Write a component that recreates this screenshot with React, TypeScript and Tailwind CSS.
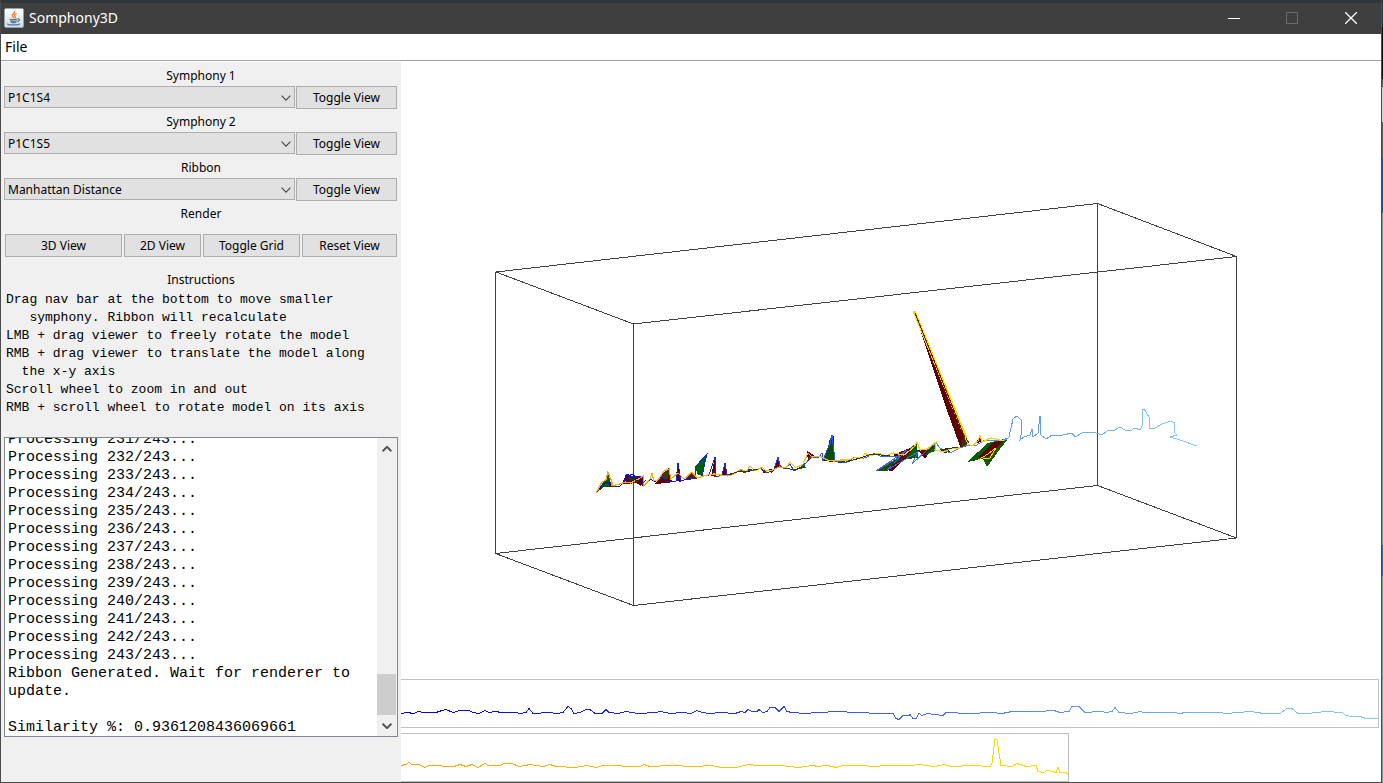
import type { ReactNode } from "react";

const UI = "font-['Noto_Sans','Open_Sans',sans-serif]";

const symphonies = ["P1C1S4", "P1C1S5"];
const metrics = ["Manhattan Distance", "Euclidean Distance"];

const logLines = [
  ...Array.from({ length: 13 }, (_, i) => `Processing ${231 + i}/243...`),
  "Ribbon Generated. Wait for renderer to",
  "update.",
  "",
  "Similarity %: 0.9361208436069661",
];

const instructions = [
  "Drag nav bar at the bottom to move smaller",
  "   symphony. Ribbon will recalculate",
  "LMB + drag viewer to freely rotate the model",
  "RMB + drag viewer to translate the model along",
  "  the x-y axis",
  "Scroll wheel to zoom in and out",
  "RMB + scroll wheel to rotate model on its axis",
].join("\n");

function JavaIcon() {
  return (
    <svg width="20" height="20" viewBox="0 0 20 20" aria-hidden="true">
      <defs>
        <linearGradient id="tile" x1="0" y1="0" x2="0" y2="1">
          <stop offset="0" stopColor="#ffffff" />
          <stop offset="1" stopColor="#d0d9e2" />
        </linearGradient>
      </defs>
      <rect x="0.5" y="0.5" width="19" height="19" rx="1.5" fill="url(#tile)" stroke="#8ea3b5" />
      <path d="M10.6 2.8c1.2 2-2.9 3-2.3 4.9.2.9 1.2 1.5 1.2 2.5M12.6 5.3c-1.9 1-2.9 1.7-1.5 3.1.7.8.2 1.5-.5 2" fill="none" stroke="#e8863a" strokeWidth="1.4" />
      <path d="M5.500 11c2.400.8 5.600.8 8 0M6.200 12.600c2 .8 4.700.8 6.600 0M6.700 14.200c2 .7 3.800.7 5.600 0M13.600 11c2.600-.7 2.500 2.200-.5 2.700M3.600 15.600c-.8 1.700 11 1.900 12.300.1" fill="none" stroke="#52799a" strokeWidth="1.2" />
    </svg>
  );
}

function Chevron({ up = false, bold = false }: { up?: boolean; bold?: boolean }) {
  return (
    <svg width="10" height="6" viewBox="0 0 10 6" fill="none" stroke={bold ? "#505050" : "#444"} strokeWidth={bold ? 2 : 1.1} aria-hidden="true">
      <path d={up ? "M0.6 5.2L5 0.9L9.4 5.2" : "M0.6 0.7L5 5.1L9.4 0.7"} />
    </svg>
  );
}

function PushButton({ children, className = "" }: { children: ReactNode; className?: string }) {
  return (
    <button type="button" className={`h-[23px] whitespace-nowrap border border-[#adadad] bg-[#e1e1e1] text-center leading-5 ${className}`}>
      {children}
    </button>
  );
}

function SelectRow({ id, label, value, options }: { id: string; label: string; value: string; options: string[] }) {
  return (
    <div>
      <label htmlFor={id} className="flex h-6 items-center justify-center pt-1">{label}</label>
      <div className="flex gap-px pr-px">
        <div className="relative min-w-0 flex-1">
          <select id={id} defaultValue={value} className="block h-[22px] w-full appearance-none border border-[#adadad] bg-[#e1e1e1] px-[3px] pt-[2px]">
            {options.map((o) => <option key={o}>{o}</option>)}
          </select>
          <span className="pointer-events-none absolute inset-y-0 right-1 flex items-center pt-px"><Chevron /></span>
        </div>
        <PushButton className="-mb-px w-[101px]">Toggle View</PushButton>
      </div>
    </div>
  );
}

/* Ribbon facets: [colour, points] */
const facets: [string, string][] = [
  ["#006000", "596,493 602,484 606,479 608,473 610,480 612,486 603,487"],
  ["#600000", "609,480 613,486 609,486"],
  ["#600000", "622,484 626,474 629,474 632,484"],
  ["#202060", "627,475 641,477 640,483 630,483"],
  ["#600000", "633,478 643,477 643,486 637,484"],
  ["#600000", "655,484 664,472 669,468 672,482 667,483"],
  ["#304000", "660,477 669,469 668,480"],
  ["#600000", "676,481 678,463 681,482"],
  ["#502000", "684,480 692,472 697,479"],
  ["#006000", "695,466 707,454 703,475 698,475"],
  ["#600000", "711,476 715,457 716,477"],
  ["#600000", "722,475 725,463 727,475"],
  ["#600000", "745,472 749,467 750,472"],
  ["#600000", "762,470 767,470 764,474"],
  ["#600000", "769,469 776,469 771,473"],
  ["#600000", "775,468 778,457 781,466"],
  ["#006000", "798,469 804,464 806,468"],
  ["#600000", "807,451 814,455 808,462"],
  ["#600000", "823,461 830,446 834,462"],
  ["#005000", "825,461 830,438 834,436 834,461"],
  ["#202850", "836,460 846,460 845,463 838,463"],
  ["#205000", "876,471 900,456 918,442 915,458 902,460 887,471"],
  ["#600000", "893,455 910,448 916,455 902,461"],
  ["#600000", "886,470 898,461 905,459 892,471"],
  ["#006000", "907,457 917,442 918,458"],
  ["#600000", "918,450 927,449 936,442 925,459"],
  ["#006000", "923,456 937,442 935,451"],
  ["#402000", "940,450 946,448 950,452 944,453"],
  ["#600000", "914,311 917,316 966,440 961,449 949,416"],
  ["#403000", "961,447 964,434 969,442 966,447"],
  ["#600000", "976,443 980,436 981,442"],
  ["#006000", "967,462 988,443 1008,438 987,467 983,459"],
  ["#205000", "985,459 1007,440 987,466"],
  ["#600000", "978,458 993,442 1003,441 988,457"],
];

const fullRidge = "596,493 602,485 607,482 610,484 614,486 619,487 624,482 627,474 629,476 632,474 636,477 641,476 644,486 648,481 651,479 654,482 662,477 667,482 671,481 676,481 678,463 681,481 687,479 695,478 696,466 707,454 702,475 709,475 715,457 716,477 722,475 725,463 727,475 734,473 740,470 745,473 749,469 754,471 760,468 767,473 774,469 778,457 780,466 784,469 790,464 794,471 801,467 807,462 810,457 818,458 822,453 823,461 827,450 830,444 832,435 835,461 842,462 847,462 855,457 862,459 869,456 875,453 882,457 889,456 897,457 901,456 876,471 907,450 887,470 918,452 912,464 926,451 936,443 940,448 950,453 960,448 968,445 975,446 985,440 1003,440 1008,438";
const shortRidge = "596,493 602,482 606,480 608,472 612,482 612,486 620,484 625,482 631,483 640,478 643,476 644,486 650,479 652,473 654,481 658,480 664,471 669,469 671,479 678,473 684,479 692,472 697,478 707,475 714,474 721,475 728,476 734,474 741,469 746,472 750,466 755,471 762,467 766,471 773,470 779,467 786,468 790,462 796,468 803,464 808,453 812,457 820,456 827,460 834,461 841,460 848,460 857,457 862,459 865,453 870,456 878,453 886,456 893,453 904,455 914,447 917,442 920,450 927,449 936,442 935,450 944,452 952,448 960,448";
const shortRidgeEnd = "964,436 968,444 972,446 978,441 980,435 982,442 991,438 1004,441";

function Scene() {
  return (
    <svg viewBox="401 62 980 610" className="block w-full" role="img" aria-label="3D ribbon view" fill="none" shapeRendering="crispEdges">
      <path d="M496 272L1097.5 203.5L1236.5 256.5L633.5 324ZM495.5 553.5L1097.5 485.5L1236.5 538L633.5 605.5ZM495.5 272V553.5M1097.5 204V485M1236.5 256V538M633.5 324V605.5" stroke="#404040" />
      {facets.map(([fill, points]) => <polygon key={points} points={points} fill={fill} />)}
      <linearGradient id="blue3d" gradientUnits="userSpaceOnUse" x1="596" x2="1008" y1="0" y2="0">
        <stop stopColor="#0000f0" /><stop offset="0.5" stopColor="#2244f0" /><stop offset="1" stopColor="#5b94ea" />
      </linearGradient>
      <linearGradient id="gold3d" gradientUnits="userSpaceOnUse" x1="596" x2="1008" y1="0" y2="0">
        <stop stopColor="#ffa500" /><stop offset="1" stopColor="#ffd700" />
      </linearGradient>
      <linearGradient id="tail3d" gradientUnits="userSpaceOnUse" x1="1005" x2="1197" y1="0" y2="0">
        <stop stopColor="#5f96ea" /><stop offset="1" stopColor="#87ceeb" />
      </linearGradient>
      <polyline points={fullRidge} stroke="url(#blue3d)" />
      <polyline points={shortRidge} stroke="url(#gold3d)" strokeWidth="1.2" />
      <polyline points={shortRidgeEnd} stroke="url(#gold3d)" strokeWidth="1.2" />
      <path d="M598 491L604 486L609 487L616 486M629 480L632 478L638 482M640 486L646 480M729 475L737 472L748 471L758 469M785 468L795 470L803 466M846 462L860 458L872 454L890 456M885 469L908 455M940 450L958 447" stroke="#204010" />
      <path d="M914 311L966 438" stroke="#ffd700" strokeWidth="3" />
      <path d="M915 313L965 438" stroke="#503000" />
      <path d="M978 460L988 454L996 448L990 458L983 459" stroke="#ffd700" />
      <polyline stroke="url(#tail3d)" points="1004,441 1009,437 1011,428 1013,419 1017,416 1021,420 1021,435 1020,440 1024,437 1030,435 1032,429 1033,437 1038,433 1040,416 1041,435 1046,439 1052,435 1056,436 1063,435 1072,433 1075,437 1082,433 1093,432 1102,435 1107,431 1115,430 1120,427 1125,430 1130,431 1135,428 1140,430 1142,426 1142,409 1144,409 1149,417 1149,428 1155,428 1162,424 1171,421 1175,423 1174,432 1177,435 1170,437 1180,440 1197,446" />
    </svg>
  );
}

function Tracks() {
  return (
    <svg viewBox="401 679 980 103" className="block w-full" role="img" aria-label="Navigation tracks" fill="none" shapeRendering="crispEdges">
      <linearGradient id="blueNav" gradientUnits="userSpaceOnUse" x1="401" x2="1378" y1="0" y2="0">
        <stop stopColor="#0000e0" /><stop offset="0.35" stopColor="#2138f0" /><stop offset="0.7" stopColor="#649bea" /><stop offset="1" stopColor="#87ceeb" />
      </linearGradient>
      <linearGradient id="goldNav" gradientUnits="userSpaceOnUse" x1="401" x2="1068" y1="0" y2="0">
        <stop stopColor="#ffa500" /><stop offset="1" stopColor="#ffdc00" />
      </linearGradient>
      <path d="M401 679.5H1378.5V727.5H401M401 733.5H1068.5V781.5H401" stroke="#c0c0c0" />
      <polyline stroke="url(#blueNav)" points="401,713.5 407,712.5 414,713.5 418,711.5 424,712.5 436,712.5 442,710.5 446,709.5 453,712.5 460,710.5 469,710.5 473,712.5 479,713.5 485,710.5 489,712.5 496,711.5 501,712.5 515,712.5 521,713.5 526,712.5 529,708.5 533,713.5 549,712.5 557,713.5 563,712.5 568,706.5 571,708.5 574,713.5 580,712.5 586,709.5 590,709.5 595,713.5 602,713.5 606,709.5 609,712.5 618,713.5 626,711.5 638,713.5 656,712.5 661,711.5 670,713.5 682,712.5 691,713.5 697,710.5 702,712.5 710,713.5 720,712.5 735,713.5 741,711.5 745,712.5 748,709.5 752,711.5 757,711.5 759,709.5 763,712.5 767,711.5 770,707.5 775,707.5 779,711.5 784,706.5 787,711.5 792,712.5 806,713.5 816,712.5 840,711.5 853,712.5 885,713.5 893,713.5 896,718.5 899,719.5 903,715.5 909,715.5 910,714.5 913,718.5 916,718.5 919,713.5 922,715.5 927,713.5 943,715.5 946,712.5 969,713.5 991,712.5 1002,713.5 1012,711.5 1038,711.5 1054,710.5 1060,712.5 1069,711.5 1072,706.5 1079,706.5 1085,712.5 1100,711.5 1107,712.5 1112,711.5 1115,707.5 1119,712.5 1131,713.5 1140,711.5 1144,712.5 1173,712.5 1180,713.5 1185,712.5 1220,712.5 1226,713.5 1250,711.5 1264,713.5 1280,713.5 1287,708.5 1292,708.5 1298,713.5 1307,713.5 1326,711.5 1342,712.5 1346,715.5 1352,716.5 1360,716.5 1366,718.5 1378,718.5" />
      <polyline stroke="url(#goldNav)" points="401,765.5 406,764.5 409,762.5 412,764.5 419,764.5 425,767.5 429,765.5 454,766.5 460,764.5 466,766.5 472,764.5 478,767.5 485,763.5 488,765.5 500,765.5 504,763.5 512,763.5 519,766.5 526,765.5 529,764.5 543,766.5 550,764.5 556,766.5 575,767.5 587,765.5 596,767.5 603,765.5 640,766.5 644,764.5 650,766.5 670,765.5 695,766.5 712,765.5 721,767.5 736,767.5 748,764.5 757,765.5 780,765.5 798,767.5 813,765.5 818,766.5 827,765.5 837,767.5 842,765.5 862,765.5 873,766.5 887,765.5 912,765.5 919,764.5 934,766.5 945,764.5 950,766.5 974,765.5 990,766.5 992,763.5 995,739.5 997,739.5 1001,765.5 1012,766.5 1017,763.5 1026,766.5 1036,765.5 1038,771.5 1044,772.5 1047,770.5 1053,771.5 1056,772.5 1058,767.5 1060,772.5 1066,772.5 1068,774.5" />
    </svg>
  );
}

export default function App() {
  return (
    <div className={`flex min-h-screen bg-[linear-gradient(#30363a_0_27px,#0a0a0a_27px_79px,#5a5a5a_79px_87px,#d0d0d0_87px_122px,#5a5a5a_122px_158px,#2b4f9e_158px_213px,#8f949a_213px_545px,#2f62ae_545px_576px,#8f949a_576px)] pr-px text-xs text-black ${UI}`}>
      <div className="flex flex-1 flex-col border border-t-3 border-[#4c4c4c] border-t-[#30363a] bg-white">
        <header className="flex h-[31px] items-center bg-[#3f3f3f] pb-px pl-[3px] text-white">
          <JavaIcon />
          <h1 className="ml-[5px] flex-1 text-sm">Somphony3D</h1>
          <button type="button" aria-label="Minimize" className="flex h-full w-[58px] items-center justify-center">
            <span className="h-px w-3 bg-white" />
          </button>
          <button type="button" aria-label="Maximize" disabled className="flex h-full w-[58px] items-center justify-center">
            <span className="size-3 border border-[#6c6c6c]" />
          </button>
          <button type="button" aria-label="Close" className="flex h-full w-[60px] items-center justify-center">
            <svg width="12" height="12" viewBox="0 0 12 12" stroke="white" strokeWidth="1.3" aria-hidden="true"><path d="M0 0L12 12M12 0L0 12" /></svg>
          </button>
        </header>
        <nav className="flex h-[27px] items-center border-b border-[#a0a0a0] bg-white pl-1">
          <button type="button" className="text-sm">File</button>
        </nav>
        <main className="mt-px flex flex-1">
          <aside className="w-[400px] shrink-0 bg-[#f0f0f0] px-[3px]">
            <SelectRow id="sym1" label="Symphony 1" value="P1C1S4" options={symphonies} />
            <SelectRow id="sym2" label="Symphony 2" value="P1C1S5" options={symphonies} />
            <SelectRow id="ribbon" label="Ribbon" value="Manhattan Distance" options={metrics} />
            <h2 className="flex h-6 items-center justify-center pt-1">Render</h2>
            <div className="mt-[10px] flex gap-[2px] px-px">
              <PushButton className="flex-1">3D View</PushButton>
              <PushButton className="w-[77px]">2D View</PushButton>
              <PushButton className="w-[97px]">Toggle Grid</PushButton>
              <PushButton className="w-[95px]">Reset View</PushButton>
            </div>
            <h2 className="mt-3 flex h-[22px] items-center justify-center">Instructions</h2>
            <pre className="pl-[2px] font-['Liberation_Mono',monospace] text-[13px] leading-[18px]">{instructions}</pre>
            <div className="mt-5 flex h-[300px] border border-[#828790] bg-white">
              <div role="log" className="flex min-w-0 flex-1 flex-col justify-end overflow-hidden pl-[3px]">
                <pre className="-mb-px font-['Liberation_Mono',monospace] text-[15px] leading-[18px]">{logLines.join("\n")}</pre>
              </div>
              <div className="flex w-5 flex-col bg-[#f0f0f0] pr-px">
                <button type="button" aria-label="Scroll up" className="flex h-[21px] items-center justify-center"><Chevron up bold /></button>
                <div className="flex flex-1 flex-col justify-end"><div className="h-[41px] bg-[#cdcdcd]" /></div>
                <button type="button" aria-label="Scroll down" className="flex h-[21px] items-center justify-center"><Chevron bold /></button>
              </div>
            </div>
          </aside>
          <section className="flex min-w-0 flex-1 flex-col justify-between">
            <Scene />
            <Tracks />
          </section>
        </main>
      </div>
    </div>
  );
}
